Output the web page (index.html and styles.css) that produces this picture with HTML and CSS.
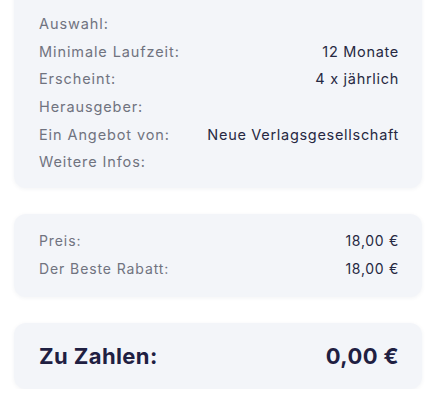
FILE: index.html
```html
<!DOCTYPE html>
<html lang="de">
<head>
  <meta charset="UTF-8">
  <meta name="viewport" content="width=device-width, initial-scale=1.0">
  <title>Bestellübersicht</title>
  <link rel="stylesheet" href="styles.css">
</head>
<body>
  <div class="summary">
    <div class="card details">
      <div class="row"><span class="label">Auswahl:</span><span class="value"></span></div>
      <div class="row"><span class="label">Minimale Laufzeit:</span><span class="value">12 Monate</span></div>
      <div class="row"><span class="label">Erscheint:</span><span class="value">4 x jährlich</span></div>
      <div class="row"><span class="label">Herausgeber:</span><span class="value"></span></div>
      <div class="row"><span class="label">Ein Angebot von:</span><span class="value">Neue Verlagsgesellschaft</span></div>
      <div class="row"><span class="label">Weitere Infos:</span><span class="value"></span></div>
    </div>

    <div class="card prices">
      <div class="row"><span class="label">Preis:</span><span class="value">18,00 €</span></div>
      <div class="row"><span class="label">Der Beste Rabatt:</span><span class="value">18,00 €</span></div>
    </div>

    <div class="card total">
      <div class="row"><span class="label">Zu Zahlen:</span><span class="value">0,00 €</span></div>
    </div>
  </div>
</body>
</html>
```

FILE: styles.css
```css
body { margin: 0; background: #fff; font-family: Inter, "Liberation Sans", sans-serif; color: #2a2c47; }
.summary { display: flex; flex-direction: column; gap: 26px; padding: 0 16px 0 14px; margin-top: -14px; }
.card { background: #f3f5f9; border-radius: 12px; padding: 13px 23px 14px 25px; box-shadow: 0 1px 4px rgba(40, 50, 90, 0.06); }
.row { display: flex; justify-content: space-between; align-items: center; }
.label { color: #70737f; letter-spacing: 0.9px; }
.value { color: #262842; font-weight: 400; letter-spacing: 0.7px; }

.details { padding-top: 24px; padding-bottom: 12px; }
.details .row { height: 27.6px; font-size: 14.5px; }
.prices .row { height: 28px; font-size: 14px; }
.total { padding-top: 14px; padding-bottom: 14px; }
.total .row { height: 38px; font-size: 22px; }
.total .label, .total .value { color: #1f2042; font-weight: 700; letter-spacing: 0.4px; }
```
